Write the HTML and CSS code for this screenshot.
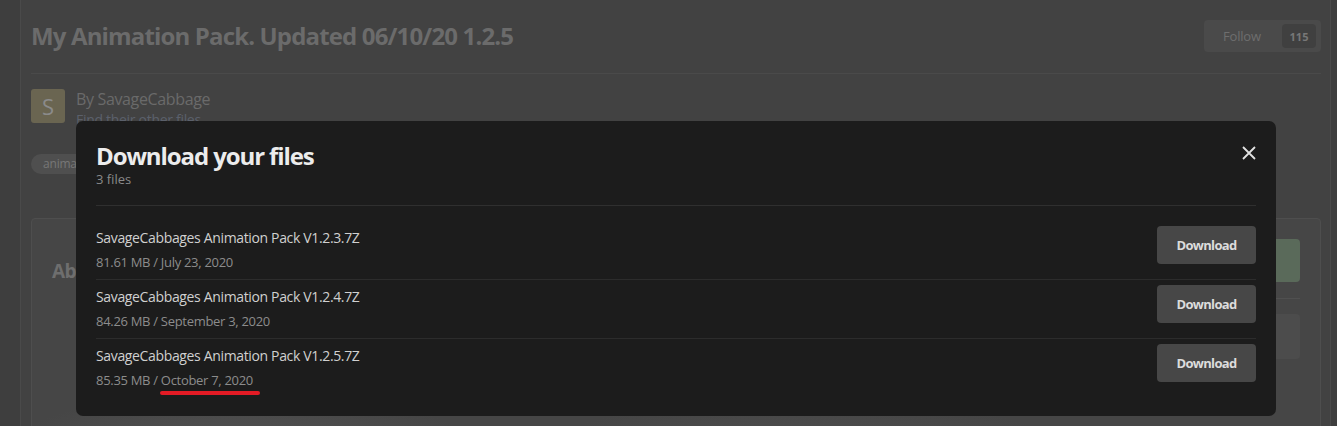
FILE: index.html
```html
<!DOCTYPE html>
<html lang="en">
<head>
<meta charset="utf-8">
<title>My Animation Pack. Updated 06/10/20 1.2.5</title>
<link rel="stylesheet" href="styles.css">
</head>
<body>
<div class="shell">
  <main class="page">
    <header class="page-head">
      <h1 class="page-title">My Animation Pack. Updated 06/10/20 1.2.5</h1>
      <button class="follow" type="button">Follow <span class="follow-count">115</span></button>
    </header>

    <div class="author">
      <div class="avatar">S</div>
      <div class="author-text">
        <div class="author-name">By SavageCabbage</div>
        <a class="author-link">Find their other files</a>
      </div>
    </div>

    <div class="tags"><span class="tag">animation</span></div>

    <section class="card">
      <div class="card-main">
        <h2 class="card-title">About This File</h2>
      </div>
      <aside class="card-side">
        <div class="side-box side-box--primary"></div>
        <div class="side-sep"></div>
        <div class="side-box"></div>
      </aside>
    </section>
  </main>
</div>

<div class="modal" role="dialog" aria-labelledby="dl-title">
  <div class="modal-head">
    <div class="modal-heading">
      <h2 class="modal-title" id="dl-title">Download your files</h2>
      <div class="modal-sub">3 files</div>
    </div>
    <button class="modal-close" type="button" aria-label="Close">
      <svg width="14" height="14" viewBox="0 0 14 14" aria-hidden="true">
        <path d="M1 1 L13 13 M13 1 L1 13" stroke="#e2e2e2" stroke-width="1.8" fill="none"/>
      </svg>
    </button>
  </div>

  <ul class="files">
    <li class="file">
      <div class="file-info">
        <div class="file-name">SavageCabbages Animation Pack V1.2.3.7Z</div>
        <div class="file-meta">81.61 MB / July 23, 2020</div>
      </div>
      <button class="dl" type="button">Download</button>
    </li>
    <li class="file">
      <div class="file-info">
        <div class="file-name">SavageCabbages Animation Pack V1.2.4.7Z</div>
        <div class="file-meta">84.26 MB / September 3, 2020</div>
      </div>
      <button class="dl" type="button">Download</button>
    </li>
    <li class="file">
      <div class="file-info">
        <div class="file-name">SavageCabbages Animation Pack V1.2.5.7Z</div>
        <div class="file-meta">85.35 MB / <span class="marked">October 7, 2020</span></div>
      </div>
      <button class="dl" type="button">Download</button>
    </li>
  </ul>
</div>
</body>
</html>
```

FILE: styles.css
```css
* {
  box-sizing: border-box;
}

html,
body {
  margin: 0;
  height: 100%;
  overflow: hidden;
}

body {
  background: #3e3e3e;
  font-family: "Open Sans", "Noto Sans", sans-serif;
  color: #6c6c6c;
}

/* dimmed page behind the dialog */
.shell {
  margin: 0 6px 0 20px;
  min-height: 100%;
  background: #424242;
  border-left: 1px solid #4a4a4a;
  border-right: 1px solid #4a4a4a;
}

.page {
  padding: 0 9px 0 10px;
}

.page-head {
  height: 74px;
  display: flex;
  align-items: center;
  justify-content: space-between;
  border-bottom: 1px solid #4a4a4a;
}

.page-title {
  margin: 0 0 1px;
  font-size: 24px;
  line-height: 32px;
  font-weight: 700;
  letter-spacing: -0.85px;
  color: #6b6b6b;
}

.follow {
  height: 32px;
  width: 117px;
  margin-bottom: 1px;
  padding: 0 5px 0 19px;
  display: flex;
  align-items: center;
  justify-content: space-between;
  border: 0;
  border-radius: 4px;
  background: #4a4a4a;
  font-family: inherit;
  font-size: 13px;
  letter-spacing: -0.2px;
  color: #6e6e6e;
}

.follow-count {
  width: 34px;
  height: 24px;
  display: flex;
  align-items: center;
  justify-content: center;
  border-radius: 4px;
  background: #404040;
  font-size: 11px;
  font-weight: 700;
  letter-spacing: 0;
  color: #777;
}

.author {
  margin-top: 15px;
  display: flex;
  gap: 11px;
}

.avatar {
  width: 34px;
  height: 34px;
  border-radius: 3px;
  background: #6a6551;
  display: flex;
  align-items: center;
  justify-content: center;
  font-size: 22px;
  color: #8b8b8b;
}

.author-text {
  margin-top: -1px;
}

.author-name {
  font-size: 16px;
  line-height: 22px;
  letter-spacing: -0.35px;
  color: #6a6a6a;
}

.author-link {
  display: block;
  font-size: 14px;
  line-height: 20px;
  letter-spacing: -0.3px;
  color: #5b606b;
}

.tags {
  margin-top: 24px;
  display: flex;
}

.tag {
  height: 20px;
  padding: 0 12px;
  border-radius: 10px;
  background: #4f4f4f;
  font-size: 12px;
  line-height: 20px;
  letter-spacing: -0.2px;
  color: #777;
}

.card {
  margin-top: 44px;
  height: 260px;
  padding: 20px;
  display: flex;
  gap: 30px;
  border: 1px solid #4e4e4e;
  border-radius: 4px;
  background:
    radial-gradient(ellipse 260px 90px at 210px 100%, #575757 0%, rgba(87, 87, 87, 0) 100%),
    radial-gradient(ellipse 300px 80px at 60% 100%, #525252 0%, rgba(82, 82, 82, 0) 100%),
    #464646;
}

.card-main {
  flex: 1;
}

.card-title {
  margin: 19px 0 0;
  font-size: 19px;
  line-height: 26px;
  font-weight: 700;
  letter-spacing: -0.5px;
  color: #6e6e6e;
}

.card-side {
  width: 260px;
  display: flex;
  flex-direction: column;
}

.side-box {
  height: 45px;
  border-radius: 4px;
  background: #4c4c4c;
}

.side-box--primary {
  height: 43px;
  background: #5a6a5a;
}

.side-sep {
  margin: 16px 0 15px;
  height: 1px;
  background: #505050;
}

/* download dialog */
.modal {
  position: fixed;
  top: 121px;
  left: 76px;
  width: 1200px;
  padding: 21px 20px 19px;
  border-radius: 7px;
  background: #1c1c1c;
  color: #d0d0d0;
}

.modal-head {
  display: flex;
  justify-content: space-between;
  align-items: flex-start;
  padding-bottom: 17px;
  border-bottom: 1px solid #2f2f2f;
}

.modal-title {
  margin: 0;
  font-size: 24px;
  line-height: 28px;
  font-weight: 700;
  letter-spacing: -1.1px;
  color: #ececec;
}

.modal-sub {
  font-size: 13px;
  line-height: 18px;
  color: #8a8a8a;
}

.modal-close {
  margin-top: 4px;
  padding: 0;
  border: 0;
  background: none;
  width: 14px;
  height: 14px;
  display: flex;
}

.files {
  list-style: none;
  margin: 0;
  padding: 15px 0 0;
}

.file {
  height: 58px;
  padding-top: 5px;
  display: flex;
  justify-content: space-between;
  align-items: flex-start;
}

.file + .file {
  height: 59px;
  border-top: 1px solid #2c2c2c;
}

.file-info {
  margin-top: 2px;
}

.file-name {
  font-size: 14px;
  line-height: 20px;
  letter-spacing: -0.35px;
  color: #d0d0d0;
}

.file-meta {
  margin-top: 5px;
  font-size: 13px;
  line-height: 18px;
  letter-spacing: -0.3px;
  color: #8c8c8c;
}

.marked {
  position: relative;
}

.marked::after {
  content: "";
  position: absolute;
  left: -1px;
  right: -7px;
  bottom: -6px;
  height: 4px;
  border-radius: 2px;
  background: #e31b25;
}

.dl {
  width: 99px;
  height: 38px;
  border: 0;
  border-radius: 4px;
  background: #474747;
  font-family: inherit;
  font-size: 13px;
  font-weight: 700;
  letter-spacing: -0.7px;
  color: #dcdcdc;
}
```
